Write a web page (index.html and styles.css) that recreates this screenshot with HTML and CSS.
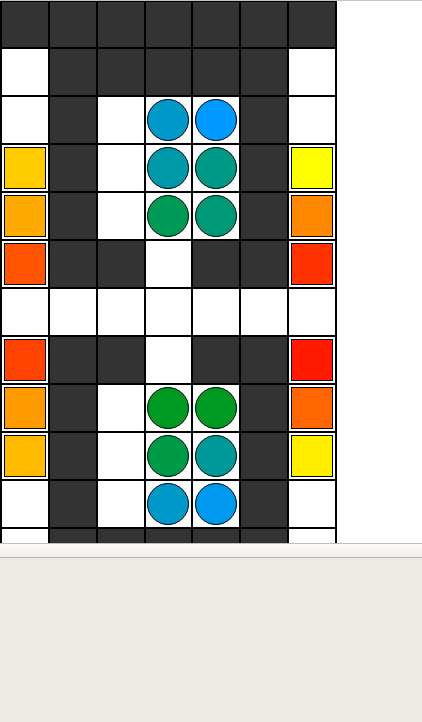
FILE: index.html
```html
<!DOCTYPE html>
<html>
<head>
<meta charset="utf-8">
<title>Board</title>
<link rel="stylesheet" href="styles.css">
</head>
<body>
<div class="view">
  <div class="topline"></div>
  <div class="board">
    <!-- row 0 -->
    <div class="d"></div><div class="d"></div><div class="d"></div><div class="d"></div><div class="d"></div><div class="d"></div><div class="d"></div>
    <!-- row 1 -->
    <div class="w"></div><div class="d"></div><div class="d"></div><div class="d"></div><div class="d"></div><div class="d"></div><div class="w"></div>
    <!-- row 2 -->
    <div class="w"></div><div class="d"></div><div class="w"></div><div class="w"><span class="ci b1"></span></div><div class="w"><span class="ci b2"></span></div><div class="d"></div><div class="w"></div>
    <!-- row 3 -->
    <div class="w"><span class="sq y1"></span></div><div class="d"></div><div class="w"></div><div class="w"><span class="ci t1"></span></div><div class="w"><span class="ci t2"></span></div><div class="d"></div><div class="w"><span class="sq y2"></span></div>
    <!-- row 4 -->
    <div class="w"><span class="sq o1"></span></div><div class="d"></div><div class="w"></div><div class="w"><span class="ci g1"></span></div><div class="w"><span class="ci g2"></span></div><div class="d"></div><div class="w"><span class="sq o2"></span></div>
    <!-- row 5 -->
    <div class="w"><span class="sq r1"></span></div><div class="d"></div><div class="d"></div><div class="w"></div><div class="d"></div><div class="d"></div><div class="w"><span class="sq r2"></span></div>
    <!-- row 6 -->
    <div class="w"></div><div class="w"></div><div class="w"></div><div class="w"></div><div class="w"></div><div class="w"></div><div class="w"></div>
    <!-- row 7 -->
    <div class="w"><span class="sq r3"></span></div><div class="d"></div><div class="d"></div><div class="w"></div><div class="d"></div><div class="d"></div><div class="w"><span class="sq r4"></span></div>
    <!-- row 8 -->
    <div class="w"><span class="sq o3"></span></div><div class="d"></div><div class="w"></div><div class="w"><span class="ci g3"></span></div><div class="w"><span class="ci g4"></span></div><div class="d"></div><div class="w"><span class="sq o4"></span></div>
    <!-- row 9 -->
    <div class="w"><span class="sq y3"></span></div><div class="d"></div><div class="w"></div><div class="w"><span class="ci g5"></span></div><div class="w"><span class="ci t3"></span></div><div class="d"></div><div class="w"><span class="sq y4"></span></div>
    <!-- row 10 -->
    <div class="w"></div><div class="d"></div><div class="w"></div><div class="w"><span class="ci b3"></span></div><div class="w"><span class="ci b4"></span></div><div class="d"></div><div class="w"></div>
    <!-- row 11 -->
    <div class="w"></div><div class="d"></div><div class="d"></div><div class="d"></div><div class="d"></div><div class="d"></div><div class="w"></div>
  </div>
</div>
<div class="panel">
  <div class="panel-bar"></div>
  <div class="panel-body"></div>
</div>
</body>
</html>
```

FILE: styles.css
```css
html, body {
  margin: 0;
  padding: 0;
  background: #ffffff;
  font-family: "DejaVu Sans", sans-serif;
}

.view {
  height: 543px;
  overflow: hidden;
  background: #ffffff;
}

.topline {
  height: 1px;
  background: #c4c4c4;
}

.board {
  width: 337px;
  box-sizing: border-box;
  padding: 1px 2px 2px 2px;
  background: #000000;
  display: grid;
  grid-template-columns: repeat(7, 1fr);
  grid-template-rows: 45px repeat(11, 46px);
  gap: 2px;
}

.d {
  background: #333333;
}

.w {
  background: #ffffff;
  display: flex;
  align-items: center;
  justify-content: center;
}

.sq {
  width: 40px;
  height: 40px;
  border: 1px solid #000000;
  display: block;
}

.ci {
  width: 40px;
  height: 40px;
  border: 1px solid #000000;
  border-radius: 50%;
  display: block;
}

/* squares */
.y1 { background: #ffcc00; }
.y2 { background: #ffff00; }
.o1 { background: #ffaa00; }
.o2 { background: #ff8800; }
.r1 { background: #ff5500; }
.r2 { background: #ff3300; }
.r3 { background: #ff4400; }
.r4 { background: #ff1a00; }
.o3 { background: #ff9900; }
.o4 { background: #ff6600; }
.y3 { background: #ffbb00; }
.y4 { background: #ffee00; }

/* circles */
.b1 { background: #0099cc; }
.b2 { background: #0099ff; }
.t1 { background: #0099aa; }
.t2 { background: #009988; }
.g1 { background: #009955; }
.g2 { background: #009977; }
.g3 { background: #009922; }
.g4 { background: #009922; }
.g5 { background: #009944; }
.t3 { background: #009999; }
.b3 { background: #0099cc; }
.b4 { background: #0099ee; }

.panel {
  border-top: 1px solid #bfbcb8;
}

.panel-bar {
  height: 13px;
  background: linear-gradient(#fbfaf9, #f0eeeb);
  border-bottom: 1px solid #b9b5b0;
}

.panel-body {
  height: 164px;
  background: #edeae6;
}
```
